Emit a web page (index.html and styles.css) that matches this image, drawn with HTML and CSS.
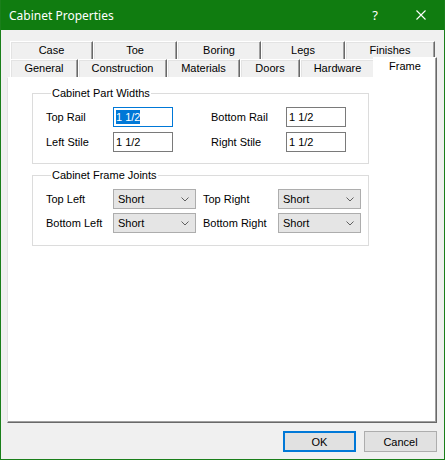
FILE: index.html
```html
<!DOCTYPE html>
<html>
<head>
<meta charset="utf-8">
<link rel="stylesheet" href="styles.css">
</head>
<body>
<div class="window">
  <div class="titlebar">
    <span class="title">Cabinet Properties</span>
    <span class="capbtn help">?</span>
    <span class="capbtn close"><svg width="10" height="10" viewBox="0 0 10 10"><path d="M0.5 0.5 L9.5 9.5 M9.5 0.5 L0.5 9.5" stroke="#fff" stroke-width="1.1" fill="none"/></svg></span>
  </div>
  <div class="client">
    <div class="tabs">
      <div class="tabrow">
        <div class="tab w83">Case</div>
        <div class="tab w84">Toe</div>
        <div class="tab w84">Boring</div>
        <div class="tab w84">Legs</div>
        <div class="tab w90">Finishes</div>
      </div>
      <div class="tabrow">
        <div class="tab w68">General</div>
        <div class="tab w89">Construction</div>
        <div class="tab w73">Materials</div>
        <div class="tab w60">Doors</div>
        <div class="tab w75">Hardware</div>
        <div class="tab selected">Frame</div>
      </div>
    </div>
    <div class="panel">
      <fieldset class="group">
        <legend>Cabinet Part Widths</legend>
        <div class="grid widths">
          <span class="lbl">Top Rail</span>
          <div class="textbox focused"><span class="sel">1 1/2</span></div>
          <span></span>
          <span class="lbl">Bottom Rail</span>
          <div class="textbox">1 1/2</div>
          <span class="lbl">Left Stile</span>
          <div class="textbox">1 1/2</div>
          <span></span>
          <span class="lbl">Right Stile</span>
          <div class="textbox">1 1/2</div>
        </div>
      </fieldset>
      <fieldset class="group second">
        <legend>Cabinet Frame Joints</legend>
        <div class="grid joints">
          <span class="lbl">Top Left</span>
          <div class="combo"><span>Short</span><svg width="8" height="5" viewBox="0 0 8 5"><path d="M0.5 0.5 L4 4 L7.5 0.5" stroke="#606060" fill="none"/></svg></div>
          <span></span>
          <span class="lbl">Top Right</span>
          <div class="combo"><span>Short</span><svg width="8" height="5" viewBox="0 0 8 5"><path d="M0.5 0.5 L4 4 L7.5 0.5" stroke="#606060" fill="none"/></svg></div>
          <span class="lbl">Bottom Left</span>
          <div class="combo"><span>Short</span><svg width="8" height="5" viewBox="0 0 8 5"><path d="M0.5 0.5 L4 4 L7.5 0.5" stroke="#606060" fill="none"/></svg></div>
          <span></span>
          <span class="lbl">Bottom Right</span>
          <div class="combo"><span>Short</span><svg width="8" height="5" viewBox="0 0 8 5"><path d="M0.5 0.5 L4 4 L7.5 0.5" stroke="#606060" fill="none"/></svg></div>
        </div>
      </fieldset>
    </div>
    <div class="buttons">
      <button class="btn ok">OK</button>
      <button class="btn">Cancel</button>
    </div>
  </div>
</div>
</body>
</html>
```

FILE: styles.css
```css
html, body { margin: 0; padding: 0; background: #f0f0f0; }

.window {
  width: 445px;
  height: 460px;
  box-sizing: border-box;
  border: 1px solid #1a7f1a;
  border-top: 0;
  background: #f0f0f0;
  display: flex;
  flex-direction: column;
  font-family: "Liberation Sans", Arial, sans-serif;
  font-size: 11px;
  color: #000;
}

.titlebar {
  height: 30px;
  flex: none;
  background: #107c10;
  color: #fff;
  display: flex;
  align-items: center;
  font-family: "Noto Sans", "Open Sans", sans-serif;
  font-size: 12px;
}
.title { flex: 1; padding-left: 8px; }
.capbtn {
  width: 46px;
  height: 30px;
  display: flex;
  align-items: center;
  justify-content: center;
}
.help { font-size: 13px; }

.client {
  flex: 1;
  display: flex;
  flex-direction: column;
  padding: 11px 6px 0 6px;
}

.tabs { margin-left: 3px; }
.tabrow { display: flex; height: 18px; }
.tab {
  box-sizing: border-box;
  height: 18px;
  flex: none;
  border-top: 1px solid #ffffff;
  border-left: 1px solid #ffffff;
  border-right: 1px solid #696969;
  box-shadow: inset -1px 0 #a0a0a0, inset 1px 1px #e3e3e3;
  background: #f0f0f0;
  text-align: center;
  line-height: 17px;
  white-space: nowrap;
}
.w60 { width: 60px; }
.w68 { width: 68px; }
.w73 { width: 73px; }
.w75 { width: 75px; }
.w83 { width: 83px; }
.w84 { width: 84px; }
.w89 { width: 89px; }
.w90 { width: 90px; }
.tab.selected {
  width: 64px;
  height: 21px;
  margin: -2px -2px -1px -2px;
  background: #ffffff;
  z-index: 1;
  line-height: 17px;
  box-shadow: inset -1px 0 #a0a0a0;
}

.panel {
  box-sizing: border-box;
  width: 430px;
  height: 346px;
  flex: none;
  background: #ffffff;
  border-top: 1px solid #ffffff;
  border-left: 1px solid #e3e3e3;
  border-right: 1px solid #696969;
  border-bottom: 1px solid #696969;
  box-shadow: inset -1px -1px #a0a0a0;
  padding-top: 8px;
}

.group {
  box-sizing: border-box;
  width: 337px;
  margin: 0 0 0 24px;
  padding: 7px 0 11px 13px;
  border: 1px solid #dcdcdc;
  min-width: 0;
}
.group.second { margin-top: 4px; padding-bottom: 12px; }
.group legend {
  padding: 0 1px;
  margin-left: 5px;
  line-height: 14px;
}

.grid { display: grid; align-items: center; }
.widths {
  grid-template-columns: 67px 60px 38px 75px 60px;
  row-gap: 5px;
}
.joints {
  grid-template-columns: 67px 83px 7px 75px 83px;
  row-gap: 4px;
}
.lbl { white-space: nowrap; }

.textbox {
  box-sizing: border-box;
  height: 20px;
  border: 1px solid #7a7a7a;
  padding-left: 2px;
  line-height: 18px;
  background: #fff;
}
.textbox.focused { border-color: #0078d7; }
.sel { background: #0078d7; color: #fff; padding: 1px 0; }

.combo {
  box-sizing: border-box;
  height: 20px;
  border: 1px solid #adadad;
  background: #e5e5e5;
  display: flex;
  align-items: center;
  justify-content: space-between;
  padding: 0 6px 0 4px;
}

.buttons {
  display: flex;
  justify-content: flex-end;
  gap: 8px;
  margin-top: 8px;
  padding-right: 1px;
}
.btn {
  box-sizing: border-box;
  width: 73px;
  height: 21px;
  border: 1px solid #adadad;
  background: #e1e1e1;
  font-family: "Liberation Sans", Arial, sans-serif;
  font-size: 11px;
  color: #000;
  padding: 0;
  margin: 0;
}
.btn.ok { border: 2px solid #0078d7; }
```
